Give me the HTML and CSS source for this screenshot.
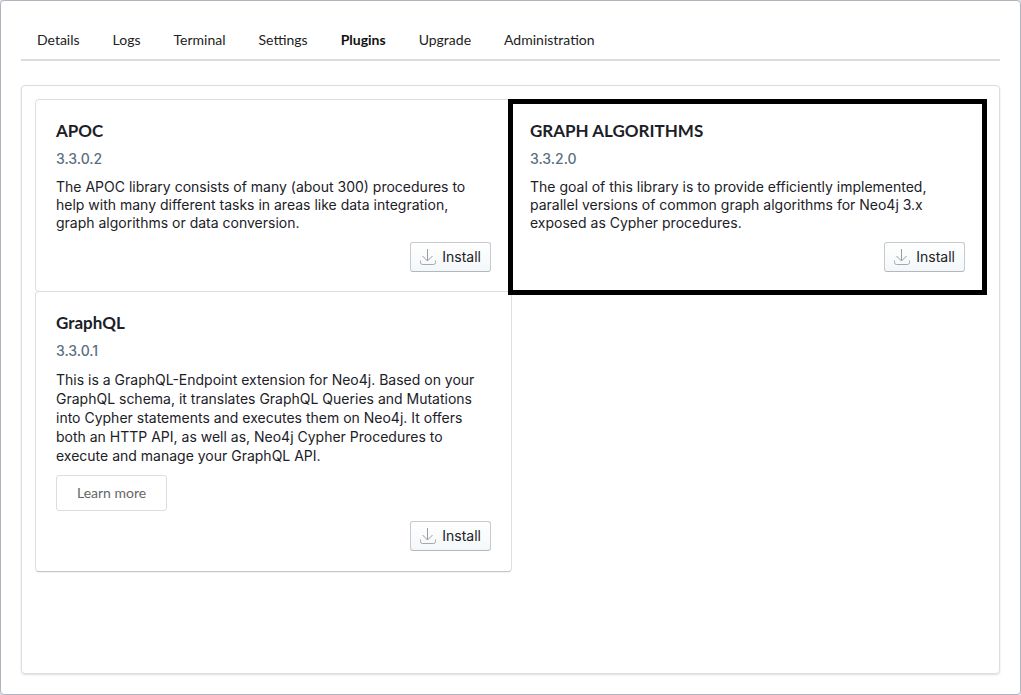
FILE: index.html
```html
<!DOCTYPE html>
<html lang="en">
<head>
<meta charset="utf-8">
<title>Plugins</title>
<link rel="stylesheet" href="styles.css">
</head>
<body>
<svg class="sprite" aria-hidden="true">
  <symbol id="download" viewBox="0 0 16 16">
    <path d="M7.500 0V12M2.500 7L7.500 12L12.500 7" fill="none" stroke="#9a9da0" stroke-width="1"/>
    <path d="M.5 11.500V13.500Q.5 15.500 2.500 15.500H13.500Q15.500 15.500 15.500 13.500V11.500" fill="none" stroke="#a5a8ab" stroke-width="1"/>
  </symbol>
</svg>
<div class="window">
  <nav class="tabs">
    <a class="tab" href="#details">Details</a>
    <a class="tab" href="#logs">Logs</a>
    <a class="tab" href="#terminal">Terminal</a>
    <a class="tab" href="#settings">Settings</a>
    <a class="tab tab-active" href="#plugins" aria-current="page">Plugins</a>
    <a class="tab" href="#upgrade">Upgrade</a>
    <a class="tab" href="#administration">Administration</a>
  </nav>
  <main class="panel">
    <div class="plugins">
      <article class="card card-first">
        <h2 class="title">APOC</h2>
        <p class="version">3.3.0.2</p>
        <p class="text">The APOC library consists of many (about 300) procedures to help with many different tasks in areas like data integration, graph algorithms or data conversion.</p>
        <button class="install" type="button"><svg class="icon" aria-hidden="true"><use href="#download"/></svg>Install</button>
      </article>
      <article class="card card-selected">
        <h2 class="title">GRAPH ALGORITHMS</h2>
        <p class="version">3.3.2.0</p>
        <p class="text">The goal of this library is to provide efficiently implemented, parallel versions of common graph algorithms for Neo4j 3.x exposed as Cypher procedures.</p>
        <button class="install" type="button"><svg class="icon" aria-hidden="true"><use href="#download"/></svg>Install</button>
      </article>
      <article class="card card-last">
        <h2 class="title">GraphQL</h2>
        <p class="version">3.3.0.1</p>
        <p class="text text-loose">This is a GraphQL-Endpoint extension for Neo4j. Based on your GraphQL schema, it translates GraphQL Queries and Mutations into Cypher statements and executes them on Neo4j. It offers both an HTTP API, as well as, Neo4j Cypher Procedures to execute and manage your GraphQL API.</p>
        <a class="learn" href="#learn-more">Learn more</a>
        <button class="install" type="button"><svg class="icon" aria-hidden="true"><use href="#download"/></svg>Install</button>
      </article>
    </div>
  </main>
</div>
</body>
</html>
```

FILE: styles.css
```css
* { box-sizing: border-box; }
body {
  margin: 0;
  background: #dfe2e8;
  color: #1b2127;
  font-family: Inter, "Liberation Sans", sans-serif;
  font-size: 14px;
}
.sprite { display: none; }
.window {
  display: flex;
  flex-direction: column;
  min-height: 100vh;
  padding: 20px;
  border: 1px solid #b1b4bf;
  border-radius: 4px;
  background: #fff;
}
.tabs {
  display: flex;
  gap: 33px;
  padding: 10px 16px;
  border-bottom: 2px solid #dcdddd;
  font-family: Lato, sans-serif;
  line-height: 18px;
}
.tab { color: #222; text-decoration: none; }
.tab-active { color: #111; font-weight: 700; }
.panel {
  flex: 1;
  margin-top: 24px;
  padding: 13px 10px 13px 13px;
  border: 1px solid #dcddde;
  border-radius: 4px;
  box-shadow: 0 1px 2px rgba(34, 36, 38, .15);
}
.plugins { display: grid; grid-template-columns: 1fr 1fr; }
.card {
  display: flex;
  flex-direction: column;
  align-items: flex-start;
  padding: 20px 20px 19px;
  border: 1px solid #dddedf;
}
.card-first { border-radius: 4px; }
.card-last {
  margin-top: -1px;
  padding-bottom: 20px;
  border-radius: 4px;
  border-bottom-color: #c3c5c8;
  box-shadow: 0 1px 1px rgba(34, 36, 38, .06);
}
.card-selected {
  z-index: 1;
  margin: 0 2px -3px -4px;
  padding: 16px 17px;
  border: 5px solid #000;
  background: #fff;
}
.title {
  margin: 0 0 8px;
  font-family: Lato, sans-serif;
  font-size: 17px;
  font-weight: 700;
  line-height: 22px;
}
.version {
  margin: 0 0 10px;
  color: #5b6f82;
  font-weight: 500;
  line-height: 18px;
}
.text { margin: 0 0 10px; padding-right: 8px; line-height: 18px; }
.text-loose { line-height: 19px; }
.learn {
  margin-bottom: 10px;
  padding: 8px 20px;
  border: 1px solid #dcddde;
  border-radius: 3px;
  color: #666;
  font-family: Lato, sans-serif;
  line-height: 18px;
  text-decoration: none;
}
.install {
  display: flex;
  align-items: center;
  gap: 6px;
  align-self: flex-end;
  height: 30px;
  padding: 0 9px;
  border: 1px solid #c6cacd;
  border-bottom-color: #b3b8c0;
  border-radius: 3px;
  background: linear-gradient(#fff, #f4f7f9);
  color: #1b2127;
  font: inherit;
  line-height: 18px;
}
.icon { width: 16px; height: 16px; }
```
